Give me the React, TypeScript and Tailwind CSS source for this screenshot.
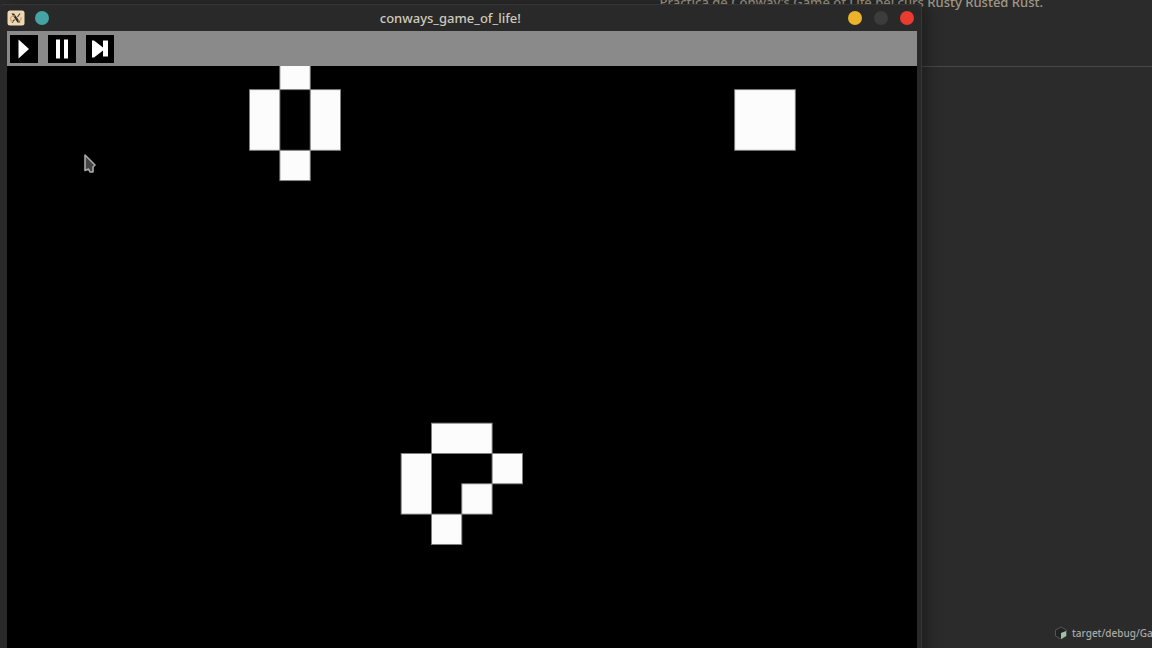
import React from "react";

type Cell = [column: number, row: number, width: number, height: number];

const liveCells: Cell[] = [
  [9, 0, 1, 1],
  [8, 1, 1, 2],
  [10, 1, 1, 2],
  [9, 3, 1, 1],
  [24, 1, 2, 2],
  [14, 12, 2, 1],
  [13, 13, 1, 2],
  [16, 13, 1, 1],
  [15, 14, 1, 1],
  [14, 15, 1, 1],
];

function Board() {
  return (
    <svg viewBox="0 0.22 30 21" className="block w-full bg-black" role="img" aria-label="Board">
      {liveCells.map(([x, y, w, h]) => (
        <rect key={`${x}-${y}`} x={x} y={y} width={w} height={h} fill="#fcfcfc" stroke="#808080" strokeWidth="0.03" />
      ))}
    </svg>
  );
}

function ToolButton({ label, children }: { label: string; children: React.ReactNode }) {
  return (
    <button aria-label={label} className="size-7 bg-black">
      <svg viewBox="0 0 28 28" className="size-7" fill="#fff">
        {children}
      </svg>
    </button>
  );
}

function TitleBar() {
  return (
    <header className="flex h-[26px] items-center bg-[#292929] pr-[3px]">
      <div className="flex flex-1 items-center gap-2.5">
        <svg viewBox="0 0 18 16" className="h-4 w-[18px]" aria-hidden="true">
          <rect x="0.5" y="0.5" width="17" height="15" rx="2.5" fill="#eed9b5" />
          <path d="M4.5 3.5h2.5l6.5 9h-3z" fill="#302d2a" />
          <path d="M13 3.5 10.5 7M7.5 9.5 5 12.5" stroke="#4b4038" strokeWidth="1.2" />
          <path d="M8 6a3.5 3 0 0 0-4.500 3q0 2.500 3 2.500M11 11a3 3 0 0 0 3-4" fill="none" stroke="#d2a06f" strokeWidth="1.2" />
        </svg>
        <button aria-label="Keep on all desktops" className="size-3.5 rounded-full bg-[#45a2a5]" />
      </div>
      <h1 className="font-['Noto_Sans','Open_Sans',sans-serif] text-[13px] leading-6 font-medium text-[#cfc9bd]">
        conways_game_of_life!
      </h1>
      <div className="flex flex-1 items-center justify-end gap-3 pl-5">
        <button aria-label="Minimize" className="size-3.5 rounded-full bg-[#edb22c]" />
        <button aria-label="Maximize" className="size-3.5 rounded-full bg-[#3b3c3b]" />
        <button aria-label="Close" className="size-3.5 rounded-full bg-[#e83c30]" />
      </div>
    </header>
  );
}

function GameWindow() {
  return (
    <section className="absolute top-1 left-0 w-4/5 rounded-t border-t border-r border-[#363636] bg-[#292929] pr-1 pl-[7px] shadow-[4px_0_16px_rgba(0,0,0,0.35)]">
      <TitleBar />
      <nav aria-label="Simulation" className="flex h-[35px] items-center gap-2.5 bg-[#8a8a8a] px-[3px]">
        <ToolButton label="Play">
          <path d="M8.5 4.5 19 14 8.5 23.5z" />
        </ToolButton>
        <ToolButton label="Pause">
          <path d="M8 4.500h4v19H8zM16 4.500h4v19h-4z" />
        </ToolButton>
        <ToolButton label="Step">
          <path d="M6 5.500h2L17 12.500V5.500h5v16h-5v-6L8 22.500H6z" />
        </ToolButton>
      </nav>
      <Board />
    </section>
  );
}

function Backdrop() {
  return (
    <main className="flex h-full flex-col font-['Noto_Sans','Open_Sans',sans-serif] font-medium">
      <div className="flex h-[67px] justify-end border-b border-[#484848] pr-[109px]">
        <p className="-mt-1.5 text-[13px] leading-4 text-[#a09886]">
          Pràctica de Conway's Game of Life pel curs Rusty Rusted Rust.
        </p>
      </div>
      <footer className="mt-auto flex h-[30px] items-center justify-end overflow-hidden">
        <div className="flex w-[98px] shrink-0 items-center gap-1 text-[10px] whitespace-nowrap text-[#aaa9a5]">
          <svg viewBox="0 0 14 14" className="size-3.5 shrink-0" aria-hidden="true">
            <path d="m7 1 5.500 3v6L7 13 1.500 10V4z" fill="#222" stroke="#555" />
            <path d="m7 7 5-2v5l-5 3z" fill="#9bc4a3" />
          </svg>
          <span>target/debug/Ga</span>
        </div>
      </footer>
    </main>
  );
}

export default function App() {
  return (
    <div className="relative h-screen overflow-hidden bg-[#2b2b2b]">
      <Backdrop />
      <GameWindow />
      <svg viewBox="0 0 14 22" className="absolute top-[153px] left-[83px] h-[22px] w-3.5" aria-hidden="true">
        <path d="M2 2 12 12 10 14 10 19 7 19 5.500 16 2 17.500z" fill="#444" stroke="#aaa" strokeWidth="1.6" strokeLinejoin="round" />
      </svg>
    </div>
  );
}
